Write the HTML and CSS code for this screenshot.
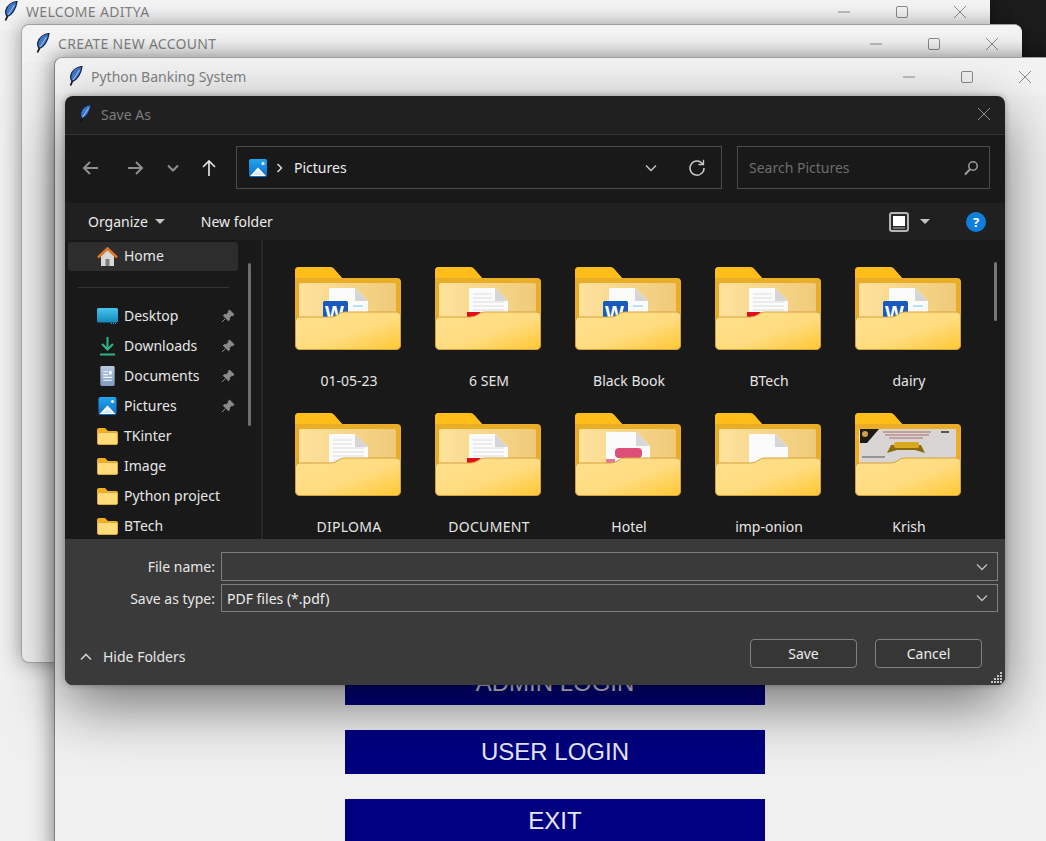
FILE: index.html
```html
<!DOCTYPE html>
<html lang="en">
<head>
<meta charset="utf-8">
<title>Save As</title>
<link rel="stylesheet" href="styles.css">
</head>
<body>
<svg class="defs" aria-hidden="true">
  <defs>
    <linearGradient id="gFront" x1="0" y1="0" x2="1" y2="1"><stop offset="0" stop-color="#ffe08c"/><stop offset=".55" stop-color="#ffdc80"/><stop offset="1" stop-color="#ffc733"/></linearGradient>
    <linearGradient id="gPaper" x1="0" y1="0" x2="1" y2="0"><stop offset="0" stop-color="#fee29c"/><stop offset="1" stop-color="#efca7a"/></linearGradient>
    <linearGradient id="gDesk" x1="0" y1="0" x2="0" y2="1"><stop offset="0" stop-color="#46c5ee"/><stop offset="1" stop-color="#1289b8"/></linearGradient>
    <linearGradient id="gDoc" x1="0" y1="0" x2="0" y2="1"><stop offset="0" stop-color="#b8c9df"/><stop offset="1" stop-color="#7f9bc0"/></linearGradient>
    <linearGradient id="gPic" x1="0" y1="0" x2="0" y2="1"><stop offset="0" stop-color="#22a5ee"/><stop offset="1" stop-color="#0f6cc8"/></linearGradient>
    <symbol id="feather" viewBox="0 0 14 20"><path d="M3.500 15 1.500 19.500" stroke="#111" stroke-width="1.800" fill="none"/><path d="M13 .5C8 1 3 4 1.800 9.500 1.200 12 2 14 3.500 15.500 8 14 12 8 13 .5Z" fill="#3f78c8" stroke="#14233f" stroke-width="1.200"/><path d="M10.500 4 4 14" stroke="#a9c8f0" stroke-width="1"/></symbol>
    <symbol id="back" viewBox="0 0 106 83"><path d="M0 4Q0 0 4 0H35Q38 0 40 3L47 11H102Q106 11 106 15V60H0Z" fill="#e9ad27"/><path d="M0 4Q0 0 4 0H35Q38 0 40 3L47 11H0Z" fill="#ffbe1a"/><rect x="4" y="16" width="97" height="50" rx="2" fill="url(#gPaper)"/></symbol>
    <symbol id="front" viewBox="0 0 106 83"><path d="M.5 54Q.5 50 4.500 50H36Q40 50 44 47 46 45 50 45H101Q105.500 45 105.500 49V78Q105.500 82.500 101 82.500H5Q.5 82.500.5 78Z" fill="url(#gFront)" stroke="#d7a23a"/></symbol>
    <symbol id="page" viewBox="0 0 106 83"><path d="M34 21H60L73 34V60H34Z" fill="#fbfbfb"/><path d="M60 21V34H73Z" fill="#d5d5d5"/></symbol>
    <symbol id="lines" viewBox="0 0 106 83"><path d="M38 27H57M38 31H57M38 35H69M38 39H69M38 43H69M38 47H69" stroke="#dcdcdc" stroke-width="1"/></symbol>
    <symbol id="red" viewBox="0 0 106 83"><path d="M32 45H46L43 48 32 51Z" fill="#e00b1c"/></symbol>
    <symbol id="small-folder" viewBox="0 0 21 17"><path d="M0 2Q0 0 2 0H8L11 3H19Q21 3 21 5V10H0Z" fill="#f2b01e"/><rect x=".5" y="4.500" width="20" height="12" rx="1.500" fill="#ffdc78" stroke="#e0a93a"/></symbol>
    <symbol id="pin" viewBox="0 0 14 14"><path d="M8.500 1 13 5.500 11.800 6.700 10.800 6.400 8.300 8.900 8.300 11 7.500 11.800 2.200 6.500 3 5.700 5.100 5.700 7.600 3.200 7.300 2.200ZM4.300 9.700 1 13" fill="#8a8a8a" stroke="#8a8a8a"/></symbol>
    <symbol id="picture" viewBox="0 0 18 18"><rect width="18" height="18" rx="2" fill="url(#gPic)"/><path d="M1 17 9 8.500 17 17Z" fill="#fff"/><path d="M4 16 9 11.500 14 16Z" fill="#d7ecfb"/><circle cx="14" cy="4.500" r="1.500" fill="#fff"/></symbol>
  </defs>
</svg>

<main class="desktop">
  <section class="window win-one">
    <header class="titlebar">
      <svg class="feather"><use href="#feather"/></svg>
      <span class="wintitle caps">WELCOME ADITYA</span>
      <div class="controls">
        <button class="ctl"><svg width="14" height="14" viewBox="0 0 14 14"><path d="M1 7H13"/></svg></button>
        <button class="ctl"><svg width="14" height="14" viewBox="0 0 14 14"><rect x="1.500" y="1.500" width="11" height="11" rx="1.500"/></svg></button>
        <button class="ctl"><svg width="14" height="14" viewBox="0 0 14 14"><path d="M1 1 13 13M13 1 1 13"/></svg></button>
      </div>
    </header>
  </section>

  <section class="window win-two">
    <header class="titlebar">
      <svg class="feather"><use href="#feather"/></svg>
      <span class="wintitle caps">CREATE NEW ACCOUNT</span>
      <div class="controls">
        <button class="ctl"><svg width="14" height="14" viewBox="0 0 14 14"><path d="M1 7H13"/></svg></button>
        <button class="ctl"><svg width="14" height="14" viewBox="0 0 14 14"><rect x="1.500" y="1.500" width="11" height="11" rx="1.500"/></svg></button>
        <button class="ctl"><svg width="14" height="14" viewBox="0 0 14 14"><path d="M1 1 13 13M13 1 1 13"/></svg></button>
      </div>
    </header>
  </section>

  <section class="window win-three">
    <header class="titlebar">
      <svg class="feather"><use href="#feather"/></svg>
      <span class="wintitle">Python Banking System</span>
      <div class="controls">
        <button class="ctl"><svg width="14" height="14" viewBox="0 0 14 14"><path d="M1 7H13"/></svg></button>
        <button class="ctl"><svg width="14" height="14" viewBox="0 0 14 14"><rect x="1.500" y="1.500" width="11" height="11" rx="1.500"/></svg></button>
        <button class="ctl"><svg width="14" height="14" viewBox="0 0 14 14"><path d="M1 1 13 13M13 1 1 13"/></svg></button>
      </div>
    </header>
    <div class="menu">
      <button class="bank-btn">ADMIN LOGIN</button>
      <button class="bank-btn">USER LOGIN</button>
      <button class="bank-btn">EXIT</button>
    </div>
  </section>

  <section class="dialog">
    <header class="dlg-title">
      <svg class="feather small"><use href="#feather"/></svg>
      <span class="dlg-name">Save As</span>
      <svg class="dlg-close" width="14" height="14" viewBox="0 0 14 14"><path d="M1 1 13 13M13 1 1 13"/></svg>
    </header>

    <div class="nav">
      <button class="nav-btn wide"><svg width="18" height="16" viewBox="0 0 18 16"><path d="M16 8H2M8 2 2 8 8 14"/></svg></button>
      <button class="nav-btn wide"><svg width="18" height="16" viewBox="0 0 18 16"><path d="M2 8H16M10 2 16 8 10 14"/></svg></button>
      <button class="nav-btn chev"><svg width="12" height="8" viewBox="0 0 12 8"><path d="M1 1.500 6 6.500 11 1.500"/></svg></button>
      <button class="nav-btn up"><svg class="bright" width="16" height="18" viewBox="0 0 16 18"><path d="M8 17V2M2 8 8 2 14 8"/></svg></button>
      <div class="address">
        <svg class="addr-pic"><use href="#picture"/></svg>
        <svg class="crumb" width="7" height="10" viewBox="0 0 7 10"><path d="M1.500 1 5.500 5 1.500 9"/></svg>
        <span class="addr-text">Pictures</span>
        <svg class="addr-chev" width="12" height="8" viewBox="0 0 12 8"><path d="M1 1.500 6 6.500 11 1.500"/></svg>
        <svg class="addr-refresh" width="18" height="18" viewBox="0 0 18 18"><path d="M14.800 5.200A7 7 0 1 0 16 9"/><path d="M10.500 5.500H15.500V.8" stroke-width="1.300"/></svg>
      </div>
      <div class="search">
        <span class="search-text">Search Pictures</span>
        <svg class="search-icon" width="16" height="16" viewBox="0 0 16 16"><circle cx="10" cy="6" r="4.200"/><path d="M7 9.200 2 14.500" stroke-width="2"/></svg>
      </div>
    </div>

    <div class="toolbar">
      <span class="tool organize">Organize</span>
      <span class="caret"></span>
      <span class="tool newfolder">New folder</span>
      <svg class="view-icon" width="20" height="20" viewBox="0 0 20 20"><rect x="1" y="1" width="18" height="18" rx="2" fill="#2a2a2a" stroke="#b5b5b5" stroke-width="2"/><rect x="4" y="4" width="12" height="10" fill="#fff"/><path d="M4 16H16" stroke="#b5b5b5"/></svg>
      <span class="caret view-caret"></span>
      <span class="help">?</span>
    </div>

    <div class="browser">
      <aside class="side">
        <div class="side-list">
          <div class="side-item home">
            <svg class="side-icon" viewBox="0 0 21 20"><path d="M4 9 10.500 3 17 9V19H4Z" fill="#d8d8d8"/><rect x="8.500" y="12" width="4" height="7" fill="#7d7d7d"/><path d="M1 10.500 10.500 1.500 20 10.500" fill="none" stroke="#e0762a" stroke-width="2.600"/></svg>
            <span>Home</span>
          </div>
          <div class="side-rule"></div>
          <div class="side-item">
            <svg class="side-icon" viewBox="0 0 21 16"><rect width="21" height="14.500" rx="1.500" fill="url(#gDesk)"/><path d="M14 15.500H19" stroke="#4aa3cc" stroke-dasharray="1 1"/></svg>
            <span class="side-label">Desktop</span><svg class="pin"><use href="#pin"/></svg>
          </div>
          <div class="side-item">
            <svg class="side-icon" viewBox="0 0 21 20"><path d="M10.500 1V13M5 8 10.500 13.500 16 8" fill="none" stroke="#2cb588" stroke-width="2"/><path d="M3 18.500H18" stroke="#2cb588" stroke-width="2"/></svg>
            <span class="side-label">Downloads</span><svg class="pin"><use href="#pin"/></svg>
          </div>
          <div class="side-item">
            <svg class="side-icon" viewBox="0 0 21 21"><rect x="3" y="0" width="15" height="21" rx="1.500" fill="url(#gDoc)"/><path d="M6 6H11M6 9H11M6 12H15M6 15H15" stroke="#f2f5fa" stroke-width="1.200"/><rect x="12" y="5" width="3" height="4" fill="#f2f5fa"/></svg>
            <span class="side-label">Documents</span><svg class="pin"><use href="#pin"/></svg>
          </div>
          <div class="side-item">
            <svg class="side-icon pic"><use href="#picture"/></svg>
            <span class="side-label">Pictures</span><svg class="pin"><use href="#pin"/></svg>
          </div>
          <div class="side-item"><svg class="side-icon folder"><use href="#small-folder"/></svg><span>TKinter</span></div>
          <div class="side-item"><svg class="side-icon folder"><use href="#small-folder"/></svg><span>Image</span></div>
          <div class="side-item"><svg class="side-icon folder"><use href="#small-folder"/></svg><span>Python project</span></div>
          <div class="side-item"><svg class="side-icon folder"><use href="#small-folder"/></svg><span>BTech</span></div>
        </div>
        <div class="side-track"><div class="side-thumb"></div></div>
      </aside>

      <div class="files">
        <div class="grid">
          <figure class="file">
            <svg class="big" viewBox="0 0 106 83"><use href="#back"/><use href="#page"/><path d="M58 39H68" stroke="#7fc4f0"/><rect x="28" y="34" width="25" height="20" rx="1.500" fill="#185abd"/><text x="30" y="53" class="w">W</text><use href="#front"/></svg>
            <figcaption>01-05-23</figcaption>
          </figure>
          <figure class="file">
            <svg class="big" viewBox="0 0 106 83"><use href="#back"/><use href="#page"/><use href="#lines"/><use href="#red"/><use href="#front"/></svg>
            <figcaption>6 SEM</figcaption>
          </figure>
          <figure class="file">
            <svg class="big" viewBox="0 0 106 83"><use href="#back"/><use href="#page"/><path d="M58 39H68" stroke="#7fc4f0"/><rect x="28" y="34" width="25" height="20" rx="1.500" fill="#185abd"/><text x="30" y="53" class="w">W</text><use href="#front"/></svg>
            <figcaption>Black Book</figcaption>
          </figure>
          <figure class="file">
            <svg class="big" viewBox="0 0 106 83"><use href="#back"/><use href="#page"/><use href="#lines"/><use href="#red"/><use href="#front"/></svg>
            <figcaption>BTech</figcaption>
          </figure>
          <figure class="file">
            <svg class="big" viewBox="0 0 106 83"><use href="#back"/><use href="#page"/><path d="M58 39H68" stroke="#7fc4f0"/><rect x="28" y="34" width="25" height="20" rx="1.500" fill="#185abd"/><text x="30" y="53" class="w">W</text><use href="#front"/></svg>
            <figcaption>dairy</figcaption>
          </figure>
          <figure class="file">
            <svg class="big" viewBox="0 0 106 83"><use href="#back"/><use href="#page"/><use href="#lines"/><use href="#front"/></svg>
            <figcaption class="caps">DIPLOMA</figcaption>
          </figure>
          <figure class="file">
            <svg class="big" viewBox="0 0 106 83"><use href="#back"/><use href="#page"/><use href="#lines"/><use href="#red"/><use href="#front"/></svg>
            <figcaption class="caps">DOCUMENT</figcaption>
          </figure>
          <figure class="file">
            <svg class="big" viewBox="0 0 106 83"><use href="#back"/><path d="M31 19H61L75 33V60H31Z" fill="#fbfbfb"/><path d="M61 19V33H75Z" fill="#d8d8d8"/><rect x="40" y="35" width="27" height="10" rx="4" fill="#dc4f78"/><path d="M31 46H40V50H31Z" fill="#e4789a"/><use href="#front"/></svg>
            <figcaption>Hotel</figcaption>
          </figure>
          <figure class="file">
            <svg class="big" viewBox="0 0 106 83"><use href="#back"/><use href="#page"/><use href="#front"/></svg>
            <figcaption>imp-onion</figcaption>
          </figure>
          <figure class="file">
            <svg class="big" viewBox="0 0 106 83"><use href="#back"/><rect x="5" y="16" width="96" height="40" fill="#d9d5d4"/><path d="M5 16H24L12 30H5Z" fill="#1e1a14"/><circle cx="10" cy="21" r="3" fill="#c9a24a"/><path d="M28 19H76M30 22H74M34 25H68" stroke="#a0504a" stroke-width=".8"/><path d="M32 40 36 32H66L70 40 60 37H42Z" fill="#8c6a10"/><rect x="39" y="29" width="25" height="6" rx="2" fill="#d9a81e"/><path d="M86 19H94" stroke="#555" stroke-width="2"/><path d="M7 44H30" stroke="#555"/><use href="#front"/></svg>
            <figcaption>Krish</figcaption>
          </figure>
        </div>
        <div class="file-track"></div>
      </div>
    </div>

    <footer class="foot">
      <div class="field first">
        <label class="field-label">File name:</label>
        <div class="combo"><span></span><svg width="12" height="8" viewBox="0 0 12 8"><path d="M1 1.500 6 6.500 11 1.500"/></svg></div>
      </div>
      <div class="field">
        <label class="field-label">Save as type:</label>
        <div class="combo"><span>PDF files (*.pdf)</span><svg width="12" height="8" viewBox="0 0 12 8"><path d="M1 1.500 6 6.500 11 1.500"/></svg></div>
      </div>
      <div class="actions">
        <svg class="hide-chev" width="12" height="8" viewBox="0 0 12 8"><path d="M1 6.500 6 1.500 11 6.500"/></svg>
        <span class="hide-text">Hide Folders</span>
        <button class="dlg-btn">Save</button>
        <button class="dlg-btn">Cancel</button>
      </div>
      <svg class="grip" width="12" height="12" viewBox="0 0 12 12"><path d="M9 0h2v2H9zM6 3h2v2H6zM9 3h2v2H9zM3 6h2v2H3zM6 6h2v2H6zM9 6h2v2H9zM0 9h2v2H0zM3 9h2v2H3zM6 9h2v2H6zM9 9h2v2H9z" fill="#c4c4c4"/></svg>
    </footer>
  </section>
</main>
</body>
</html>
```

FILE: styles.css
```css
* { box-sizing: border-box; }
html, body { margin: 0; padding: 0; height: 100%; }
body { background: #1c1c1c; font-family: "Noto Sans", "Open Sans", sans-serif; overflow: hidden; }
button { font: inherit; background: none; border: 0; padding: 0; color: inherit; }
.defs { position: absolute; width: 0; height: 0; }

.desktop { position: relative; width: 1046px; height: 841px; overflow: hidden; }

.window { position: absolute; background: #f0f0f0; border-top: 1px solid #a0a0a0; border-radius: 8px 8px 0 0; box-shadow: 0 0 20px rgba(0,0,0,.38); }
.win-one { left: -10px; top: -8px; width: 1000px; height: 860px; }
.win-two { left: 21px; top: 24px; width: 1001px; height: 639px; border-radius: 8px; border-left: 1px solid #a8a8a8; border-bottom: 1px solid #a8a8a8; }
.win-three { left: 54px; top: 57px; width: 1001px; height: 800px; border-left: 1px solid #808080; box-shadow: 0 0 22px rgba(0,0,0,.5); }

.titlebar { display: flex; align-items: center; height: 37px; background: #f3f3f3; padding-left: 14px; border-radius: 8px 8px 0 0; }
.feather { width: 14px; height: 20px; flex: none; margin-top: -2px; }
.feather.small { width: 13px; height: 19px; }
.wintitle { margin-left: 8px; font-size: 14px; color: #838383; white-space: nowrap; }
.caps { letter-spacing: .3px; }
.controls { display: flex; margin-left: auto; margin-right: 1px; }
.ctl { display: flex; align-items: center; justify-content: center; width: 58px; height: 36px; }
.ctl svg { fill: none; stroke: #8a8a8a; stroke-width: 1; }

.menu { display: flex; flex-direction: column; align-items: center; gap: 25px; padding-top: 566px; }
.bank-btn { width: 420px; height: 44px; background: #000080; color: #e9e9f4; font-family: "Liberation Sans", Arial, sans-serif; font-size: 24px; }

.dialog { position: absolute; left: 65px; top: 96px; width: 940px; height: 589px; display: flex; flex-direction: column; border-radius: 8px; overflow: hidden; background: #202020; box-shadow: 0 20px 60px rgba(0,0,0,.52), 0 0 6px rgba(0,0,0,.3); }

.dlg-title { display: flex; align-items: center; flex: none; height: 39px; padding: 0 14px 2px 14px; border-bottom: 1px solid #343434; }
.dlg-name { margin-left: 9px; font-size: 14px; color: #7c7c7c; }
.dlg-close { margin-left: auto; fill: none; stroke: #8d8d8d; }

.nav { display: flex; align-items: flex-start; flex: none; height: 68px; padding: 11px 0 0 4px; background: #191919; }
.nav-btn { display: flex; align-items: center; justify-content: center; flex: none; height: 43px; }
.nav-btn svg { fill: none; stroke: #8e8e8e; stroke-width: 2; }
.nav-btn svg.bright { stroke: #e2e2e2; stroke-width: 1.700; }
.wide { width: 44px; }
.chev { width: 32px; }
.up { width: 40px; }
.address { display: flex; align-items: center; flex: none; width: 486px; height: 43px; margin-left: 7px; padding-left: 12px; border: 1px solid #4b4b4b; }
.addr-pic { width: 18px; height: 18px; flex: none; }
.crumb { margin-left: 9px; fill: none; stroke: #dcdcdc; stroke-width: 1.500; }
.addr-text { margin-left: 11px; font-size: 14px; color: #ececec; }
.addr-chev { margin-left: auto; fill: none; stroke: #c8c8c8; stroke-width: 1.400; }
.addr-refresh { margin-left: 31px; margin-right: 15px; fill: none; stroke: #c8c8c8; stroke-width: 1.500; }
.search { display: flex; align-items: center; flex: none; width: 253px; height: 43px; margin-left: 15px; padding: 0 10px 0 11px; border: 1px solid #4b4b4b; }
.search-text { font-size: 14px; color: #6d6d6d; }
.search-icon { margin-left: auto; fill: none; stroke: #9c9c9c; stroke-width: 1.500; }

.toolbar { display: flex; align-items: center; flex: none; height: 37px; padding-left: 23px; background: #202020; }
.tool { font-size: 14px; color: #ececec; }
.caret { width: 0; height: 0; margin-left: 7px; border-left: 5px solid transparent; border-right: 5px solid transparent; border-top: 5px solid #c4c4c4; }
.newfolder { margin-left: 36px; }
.view-icon { margin-left: auto; margin-right: 3px; }
.view-caret { margin-left: 8px; }
.help { display: flex; align-items: center; justify-content: center; width: 20px; height: 20px; margin-left: 36px; margin-right: 19px; border-radius: 50%; background: #0f7fdc; color: #fff; font-size: 13px; font-weight: 700; }

.browser { display: flex; flex: none; height: 299px; background: #191919; overflow: hidden; }
.side { display: flex; flex: none; width: 198px; border-right: 2px solid #262626; }
.side-list { flex: none; width: 173px; padding: 2px 0 0 3px; }
.side-item { display: flex; align-items: center; width: 170px; height: 30px; padding-left: 29px; font-size: 14px; color: #e6e6e6; white-space: nowrap; }
.side-item span { padding-bottom: 2px; }
.side-item.home { height: 29px; background: #2d2d2d; border-radius: 3px; }
.side-rule { height: 1px; margin: 16px 9px 13px 10px; background: #333; }
.side-icon { width: 21px; height: 20px; flex: none; margin-right: 6px; }
.side-icon.pic { height: 18px; }
.side-icon.folder { height: 17px; }
.side-label { flex: 1; }
.pin { width: 14px; height: 14px; flex: none; margin-right: 3px; }
.side-track { flex: none; width: 23px; padding: 23px 0 0 10px; }
.side-thumb { width: 3px; height: 163px; background: #6e6e6e; border-radius: 2px; }

.files { display: flex; flex: 1; }
.grid { display: grid; flex: none; grid-template-columns: repeat(5, 140px); grid-auto-rows: 146px; padding: 27px 0 0 15px; width: 716px; }
.file { display: flex; flex-direction: column; align-items: center; margin: 0; }
.big { width: 106px; height: 83px; flex: none; }
.w { font-family: "Liberation Sans", Arial, sans-serif; font-size: 20px; font-weight: 700; fill: #fff; }
.file figcaption { margin-top: 21px; padding-left: 2px; font-size: 14px; line-height: 20px; color: #e6e6e6; }
.file-track { flex: none; width: 3px; height: 59px; margin: 22px 0 0 15px; background: #777; border-radius: 2px; }

.foot { position: relative; display: flex; flex-direction: column; flex: 1; padding-top: 13px; background: #3a3a3a; }
.field { display: flex; align-items: center; height: 28px; }
.field.first { height: 29px; margin-bottom: 3px; }
.field-label { flex: none; width: 150px; margin-right: 6px; text-align: right; font-size: 14px; color: #e6e6e6; }
.combo { display: flex; align-items: center; justify-content: space-between; flex: none; width: 777px; height: 100%; padding: 0 9px 0 5px; border: 1px solid #7e7e7e; font-size: 14px; color: #ececec; }
.combo svg { fill: none; stroke: #c0c0c0; stroke-width: 1.300; }
.actions { display: flex; align-items: center; margin-top: 27px; padding: 0 23px 0 15px; }
.hide-chev { margin-top: 7px; fill: none; stroke: #cfcfcf; stroke-width: 1.600; }
.hide-text { margin: 6px auto 0 11px; font-size: 14px; color: #e6e6e6; }
.dlg-btn { width: 107px; height: 29px; margin-left: 18px; border: 1px solid #808080; border-radius: 4px; font-size: 14px; color: #ececec; background: #363636; }
.grip { position: absolute; right: 2px; bottom: 1px; }
```
